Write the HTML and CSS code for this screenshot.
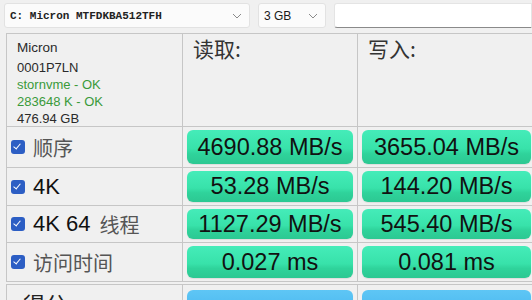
FILE: index.html
```html
<!DOCTYPE html>
<html>
<head>
    <title>AS SSD Benchmark</title>
    <meta name="viewport" content="width=device-width, initial-scale=1.0">
    <link rel="stylesheet" href="styles.css">
</head>
<body>
    <div class="toolbar">
        <div class="combo drive">
            <span class="drive-name">C: Micron MTFDKBA512TFH</span>
            <svg class="chev" width="10" height="6" viewBox="0 0 10 6"><path d="M1 1l4 4 4-4" fill="none" stroke="#8a8a8a" stroke-width="1"/></svg>
        </div>
        <div class="combo size">
            <span>3 GB</span>
            <svg class="chev" width="10" height="6" viewBox="0 0 10 6"><path d="M1 1l4 4 4-4" fill="none" stroke="#8a8a8a" stroke-width="1"/></svg>
        </div>
        <div class="textbox"></div>
    </div>

    <div class="grid">
        <div class="cell info">
            <div class="brand">Micron</div>
            <div>0001P7LN</div>
            <div class="ok">stornvme - OK</div>
            <div class="ok">283648 K - OK</div>
            <div>476.94 GB</div>
        </div>
        <div class="cell head">读取:</div>
        <div class="cell head">写入:</div>

        <div class="cell label"><span class="check"></span><span class="cjk">顺序</span></div>
        <div class="cell"><div class="result">4690.88 MB/s</div></div>
        <div class="cell"><div class="result">3655.04 MB/s</div></div>

        <div class="cell label"><span class="check"></span>4K</div>
        <div class="cell"><div class="result">53.28 MB/s</div></div>
        <div class="cell"><div class="result">144.20 MB/s</div></div>

        <div class="cell label"><span class="check"></span>4K 64<span class="cjk gap">线程</span></div>
        <div class="cell"><div class="result">1127.29 MB/s</div></div>
        <div class="cell"><div class="result">545.40 MB/s</div></div>

        <div class="cell label"><span class="check"></span><span class="cjk">访问时间</span></div>
        <div class="cell"><div class="result">0.027 ms</div></div>
        <div class="cell"><div class="result">0.081 ms</div></div>
    </div>

    <div class="grid score">
        <div class="cell label score-cell"><span class="cjk score-label">得分:</span></div>
        <div class="cell score-cell"><div class="result blue"></div></div>
        <div class="cell score-cell"><div class="result blue"></div></div>
    </div>
</body>
</html>
```

FILE: styles.css
```css
body {
    margin: 0;
    width: 532px;
    height: 300px;
    overflow: hidden;
    background-color: #f0f0f0;
    font-family: "Liberation Sans", Arial, "Noto Sans CJK SC", sans-serif;
    color: #1a1a1a;
}
.toolbar {
    display: flex;
    gap: 7px;
    padding: 3px 0 0 4px;
    height: 25px;
}
.combo {
    display: flex;
    align-items: center;
    justify-content: space-between;
    background-color: #fbfbfb;
    border: 1px solid #e2e2e2;
    border-radius: 3px;
    padding: 0 7px 0 5px;
    box-sizing: border-box;
    height: 25px;
    font-size: 12px;
}
.drive {
    width: 246px;
}
.drive-name {
    font-family: "Liberation Mono", monospace;
    font-weight: bold;
    font-size: 11px;
    color: #222;
}
.size {
    width: 68px;
    margin-left: 1px;
}
.textbox {
    flex: 1;
    height: 25px;
    margin-left: 1px;
    background-color: #fff;
    border: 1px solid #e4e4e4;
    border-bottom: 1px solid #8a8a8a;
    border-radius: 3px 0 0 3px;
    box-sizing: border-box;
}
.grid {
    display: grid;
    grid-template-columns: 176px 175px 178px;
    grid-template-rows: 93px 41px 38px 37px 39px;
    margin: 5px 0 0 6px;
}
.cell {
    border: 1px solid #c6c6c6;
    margin: 0 -1px -1px 0;
    padding: 3px 4px;
    box-sizing: border-box;
    display: flex;
    align-items: center;
}
.info {
    display: block;
    padding: 5px 10px;
    font-size: 13px;
    line-height: 17px;
    color: #2a2a2a;
}
.brand {
    font-size: 13.5px;
    margin-bottom: 3px;
}
.ok {
    color: #3a9a3a;
}
.head {
    align-items: flex-start;
    padding: 3px 10px 0;
    font-family: "Noto Sans CJK SC", serif;
    font-size: 21px;
    line-height: 22px;
    color: #333;
}
.label {
    padding-left: 4px;
    font-size: 22px;
    color: #111;
}
.cjk {
    font-family: "Noto Sans CJK SC", sans-serif;
    font-size: 20px;
    color: #555;
}
.gap {
    margin-left: 9px;
}
.check {
    display: inline-block;
    width: 14px;
    height: 14px;
    margin-right: 8px;
    border-radius: 3px;
    background-color: #2c5ec4;
    position: relative;
}
.check::after {
    content: "";
    position: absolute;
    left: 4px;
    top: 2px;
    width: 3px;
    height: 6px;
    border: solid #fff;
    border-width: 0 1.5px 1.5px 0;
    transform: rotate(40deg);
}
.result {
    flex: 1;
    height: 100%;
    border-radius: 6px;
    background: linear-gradient(#45ecb9, #38e2aa 55%, #2fd39b 70%, #2cc892);
    box-shadow: 0 1px 1px rgba(0, 0, 0, 0.08);
    display: flex;
    align-items: center;
    justify-content: center;
    font-size: 23.5px;
    color: #111;
}
.score {
    margin-top: 3px;
}
.score-cell {
    align-items: flex-start;
    padding-top: 5px;
}
.blue {
    background: linear-gradient(#5ec6f5, #45b4ee);
    height: 30px;
}
.score-label {
    color: #222;
    font-size: 22px;
    padding-left: 12px;
    line-height: 26px;
}
```
